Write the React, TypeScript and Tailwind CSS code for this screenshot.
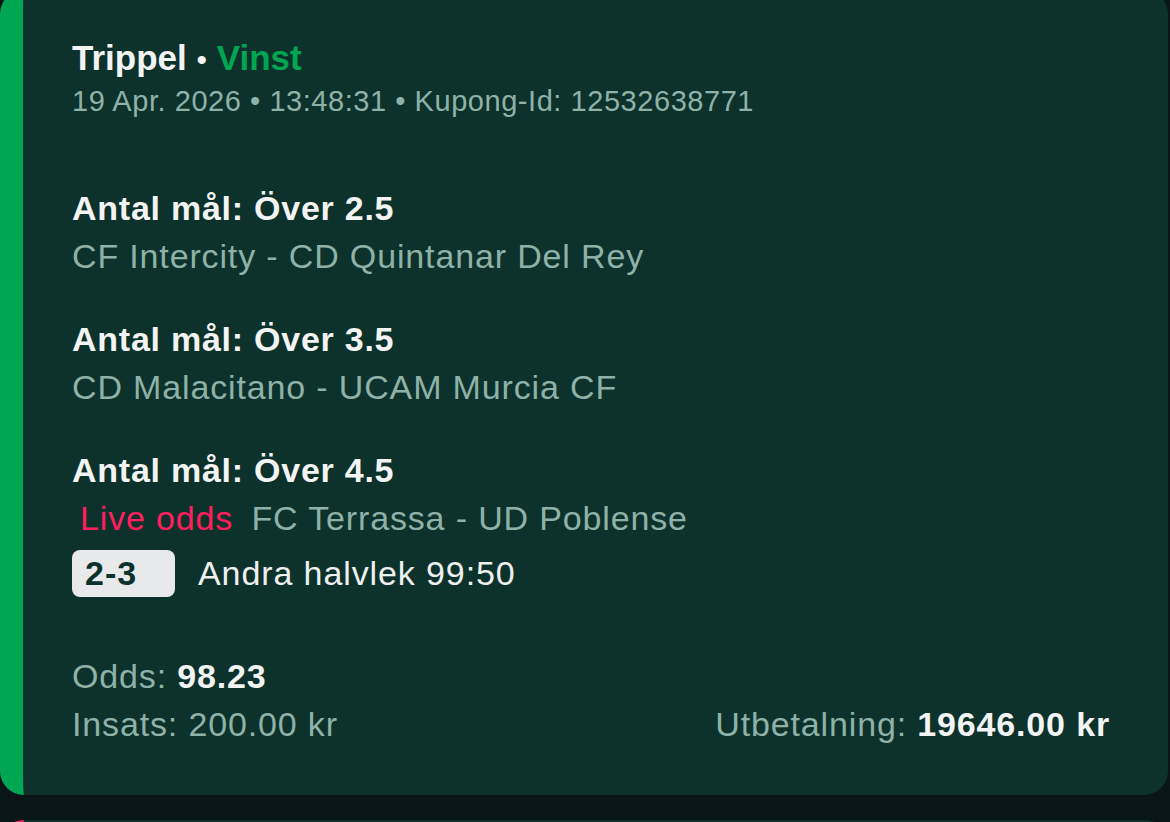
const font = { fontFamily: '"Liberation Sans", Arial, sans-serif' };

const selections = [
  { market: 'Antal mål: Över 2.5', match: 'CF Intercity - CD Quintanar Del Rey' },
  { market: 'Antal mål: Över 3.5', match: 'CD Malacitano - UCAM Murcia CF' },
  {
    market: 'Antal mål: Över 4.5',
    match: 'FC Terrassa - UD Poblense',
    live: true,
    score: '2-3',
    period: 'Andra halvlek 99:50',
  },
];

function Selection({ s }: { s: (typeof selections)[number] }) {
  return (
    <div>
      <div className="text-[34px] leading-[48px] font-bold text-[#f2f3f3] tracking-[0.75px]">{s.market}</div>
      <div className="text-[34px] leading-[48px] text-[#8fb2a8] tracking-[0.85px]">
        {s.live && <span className="px-[8px] text-[#ff1f5e]">Live odds</span>} {s.match}
      </div>
      {s.score && (
        <div className="mt-[7px] flex items-center gap-[23px]">
          <div className="w-[103px] h-[47px] rounded-[8px] bg-[#e7e9ea] px-[13px] flex items-center text-[34px] font-bold text-[#0d312b] tracking-[1px]">
            {s.score}
          </div>
          <div className="text-[34px] leading-[48px] text-[#eef0f0] tracking-[0.9px]">{s.period}</div>
        </div>
      )}
    </div>
  );
}

export default function App() {
  return (
    <div className="min-h-[822px] bg-[#0a1518] overflow-hidden" style={font}>
      <div className="-mt-[10px] w-[1168px] rounded-[24px] border-l-[23px] border-[#00a651] bg-[#0d312b] pl-[49px] pr-[58px] pt-[48px] pb-[47px]">
        <div className="h-[40px] text-[35px] leading-[40px] font-bold text-[#f2f3f3]">
          Trippel <span className="font-normal text-[30px]">•</span> <span className="text-[#00a651]">Vinst</span>
        </div>
        <div className="mt-[3px] text-[29px] leading-[40px] text-[#8fb2a8] tracking-[0.55px]">
          19 Apr. 2026 • 13:48:31 • Kupong-Id: 12532638771
        </div>

        <div className="mt-[63px] flex flex-col gap-[35px]">
          {selections.map((s) => (
            <Selection key={s.market} s={s} />
          ))}
        </div>

        <div className="mt-[55px] text-[34px] leading-[48px] text-[#8fb2a8] tracking-[0.85px]">
          <div>
            Odds: <span className="font-bold text-[#f2f3f3]">98.23</span>
          </div>
          <div className="flex justify-between">
            <span>Insats: 200.00 kr</span>
            <span>
              Utbetalning: <span className="font-bold text-[#f2f3f3]">19646.00 kr</span>
            </span>
          </div>
        </div>
      </div>

      <div className="mt-[25px] w-[1168px] h-[120px] rounded-[24px] border-l-[23px] border-[#ff1f5e] bg-[#0d312b]" />
    </div>
  );
}
